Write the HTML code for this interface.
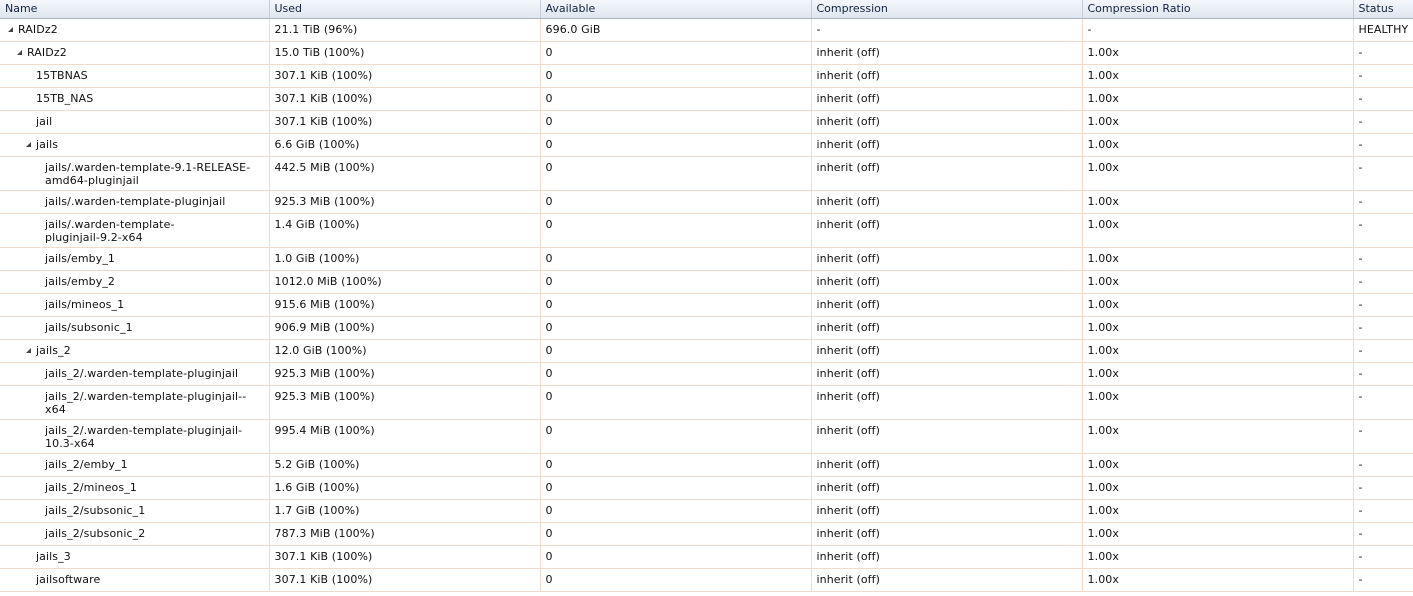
<!DOCTYPE html>
<html><head><meta charset="utf-8"><style>
body{margin:0;background:#fff;width:1413px;height:596px;overflow:hidden;font-family:"DejaVu Sans",Verdana,sans-serif;font-size:11px;color:#111}
table{border-collapse:collapse;table-layout:fixed;width:1413px}
th{height:18px;padding:0 0 0 5px;text-align:left;font-weight:normal;color:#15233f;background:linear-gradient(#f4f7fb,#dfe6ef);border-right:1px solid #c4ccd7;border-bottom:1px solid #a9b4c3;font-size:11px;line-height:18px}
td{padding:0 0 0 5px;vertical-align:top;border-right:1px solid #eddccb;border-bottom:1px solid #eddccb;line-height:13px;padding-top:4px;height:18px;white-space:nowrap;letter-spacing:0.1px}
td.n{white-space:normal}
tr.d td{height:29px}
.t{display:inline-block;width:0;height:0;border-left:5px solid transparent;border-bottom:5px solid #444;margin-right:5px;vertical-align:1px}
</style></head><body>
<table>
<colgroup><col style="width:269px"><col style="width:271px"><col style="width:271px"><col style="width:271px"><col style="width:271px"><col style="width:60px"></colgroup>
<tr><th>Name</th><th>Used</th><th>Available</th><th>Compression</th><th>Compression Ratio</th><th>Status</th></tr>
<tr><td style="padding-left:8px"><span class="t"></span>RAIDz2</td><td>21.1 TiB (96%)</td><td>696.0 GiB</td><td>-</td><td>-</td><td>HEALTHY</td></tr>
<tr><td style="padding-left:17px"><span class="t"></span>RAIDz2</td><td>15.0 TiB (100%)</td><td>0</td><td>inherit (off)</td><td>1.00x</td><td>-</td></tr>
<tr><td style="padding-left:36px">15TBNAS</td><td>307.1 KiB (100%)</td><td>0</td><td>inherit (off)</td><td>1.00x</td><td>-</td></tr>
<tr><td style="padding-left:36px">15TB_NAS</td><td>307.1 KiB (100%)</td><td>0</td><td>inherit (off)</td><td>1.00x</td><td>-</td></tr>
<tr><td style="padding-left:36px">jail</td><td>307.1 KiB (100%)</td><td>0</td><td>inherit (off)</td><td>1.00x</td><td>-</td></tr>
<tr><td style="padding-left:26px"><span class="t"></span>jails</td><td>6.6 GiB (100%)</td><td>0</td><td>inherit (off)</td><td>1.00x</td><td>-</td></tr>
<tr class="d"><td class="n" style="padding-left:45px">jails/.warden-template-9.1-RELEASE-amd64-pluginjail</td><td>442.5 MiB (100%)</td><td>0</td><td>inherit (off)</td><td>1.00x</td><td>-</td></tr>
<tr><td style="padding-left:45px">jails/.warden-template-pluginjail</td><td>925.3 MiB (100%)</td><td>0</td><td>inherit (off)</td><td>1.00x</td><td>-</td></tr>
<tr class="d"><td class="n" style="padding-left:45px">jails/.warden-template-<br>pluginjail-9.2-x64</td><td>1.4 GiB (100%)</td><td>0</td><td>inherit (off)</td><td>1.00x</td><td>-</td></tr>
<tr><td style="padding-left:45px">jails/emby_1</td><td>1.0 GiB (100%)</td><td>0</td><td>inherit (off)</td><td>1.00x</td><td>-</td></tr>
<tr><td style="padding-left:45px">jails/emby_2</td><td>1012.0 MiB (100%)</td><td>0</td><td>inherit (off)</td><td>1.00x</td><td>-</td></tr>
<tr><td style="padding-left:45px">jails/mineos_1</td><td>915.6 MiB (100%)</td><td>0</td><td>inherit (off)</td><td>1.00x</td><td>-</td></tr>
<tr><td style="padding-left:45px">jails/subsonic_1</td><td>906.9 MiB (100%)</td><td>0</td><td>inherit (off)</td><td>1.00x</td><td>-</td></tr>
<tr><td style="padding-left:26px"><span class="t"></span>jails_2</td><td>12.0 GiB (100%)</td><td>0</td><td>inherit (off)</td><td>1.00x</td><td>-</td></tr>
<tr><td style="padding-left:45px">jails_2/.warden-template-pluginjail</td><td>925.3 MiB (100%)</td><td>0</td><td>inherit (off)</td><td>1.00x</td><td>-</td></tr>
<tr class="d"><td class="n" style="padding-left:45px">jails_2/.warden-template-pluginjail--<br>x64</td><td>925.3 MiB (100%)</td><td>0</td><td>inherit (off)</td><td>1.00x</td><td>-</td></tr>
<tr class="d"><td class="n" style="padding-left:45px">jails_2/.warden-template-pluginjail-<br>10.3-x64</td><td>995.4 MiB (100%)</td><td>0</td><td>inherit (off)</td><td>1.00x</td><td>-</td></tr>
<tr><td style="padding-left:45px">jails_2/emby_1</td><td>5.2 GiB (100%)</td><td>0</td><td>inherit (off)</td><td>1.00x</td><td>-</td></tr>
<tr><td style="padding-left:45px">jails_2/mineos_1</td><td>1.6 GiB (100%)</td><td>0</td><td>inherit (off)</td><td>1.00x</td><td>-</td></tr>
<tr><td style="padding-left:45px">jails_2/subsonic_1</td><td>1.7 GiB (100%)</td><td>0</td><td>inherit (off)</td><td>1.00x</td><td>-</td></tr>
<tr><td style="padding-left:45px">jails_2/subsonic_2</td><td>787.3 MiB (100%)</td><td>0</td><td>inherit (off)</td><td>1.00x</td><td>-</td></tr>
<tr><td style="padding-left:36px">jails_3</td><td>307.1 KiB (100%)</td><td>0</td><td>inherit (off)</td><td>1.00x</td><td>-</td></tr>
<tr><td style="padding-left:36px">jailsoftware</td><td>307.1 KiB (100%)</td><td>0</td><td>inherit (off)</td><td>1.00x</td><td>-</td></tr>
</table>
</body></html>
